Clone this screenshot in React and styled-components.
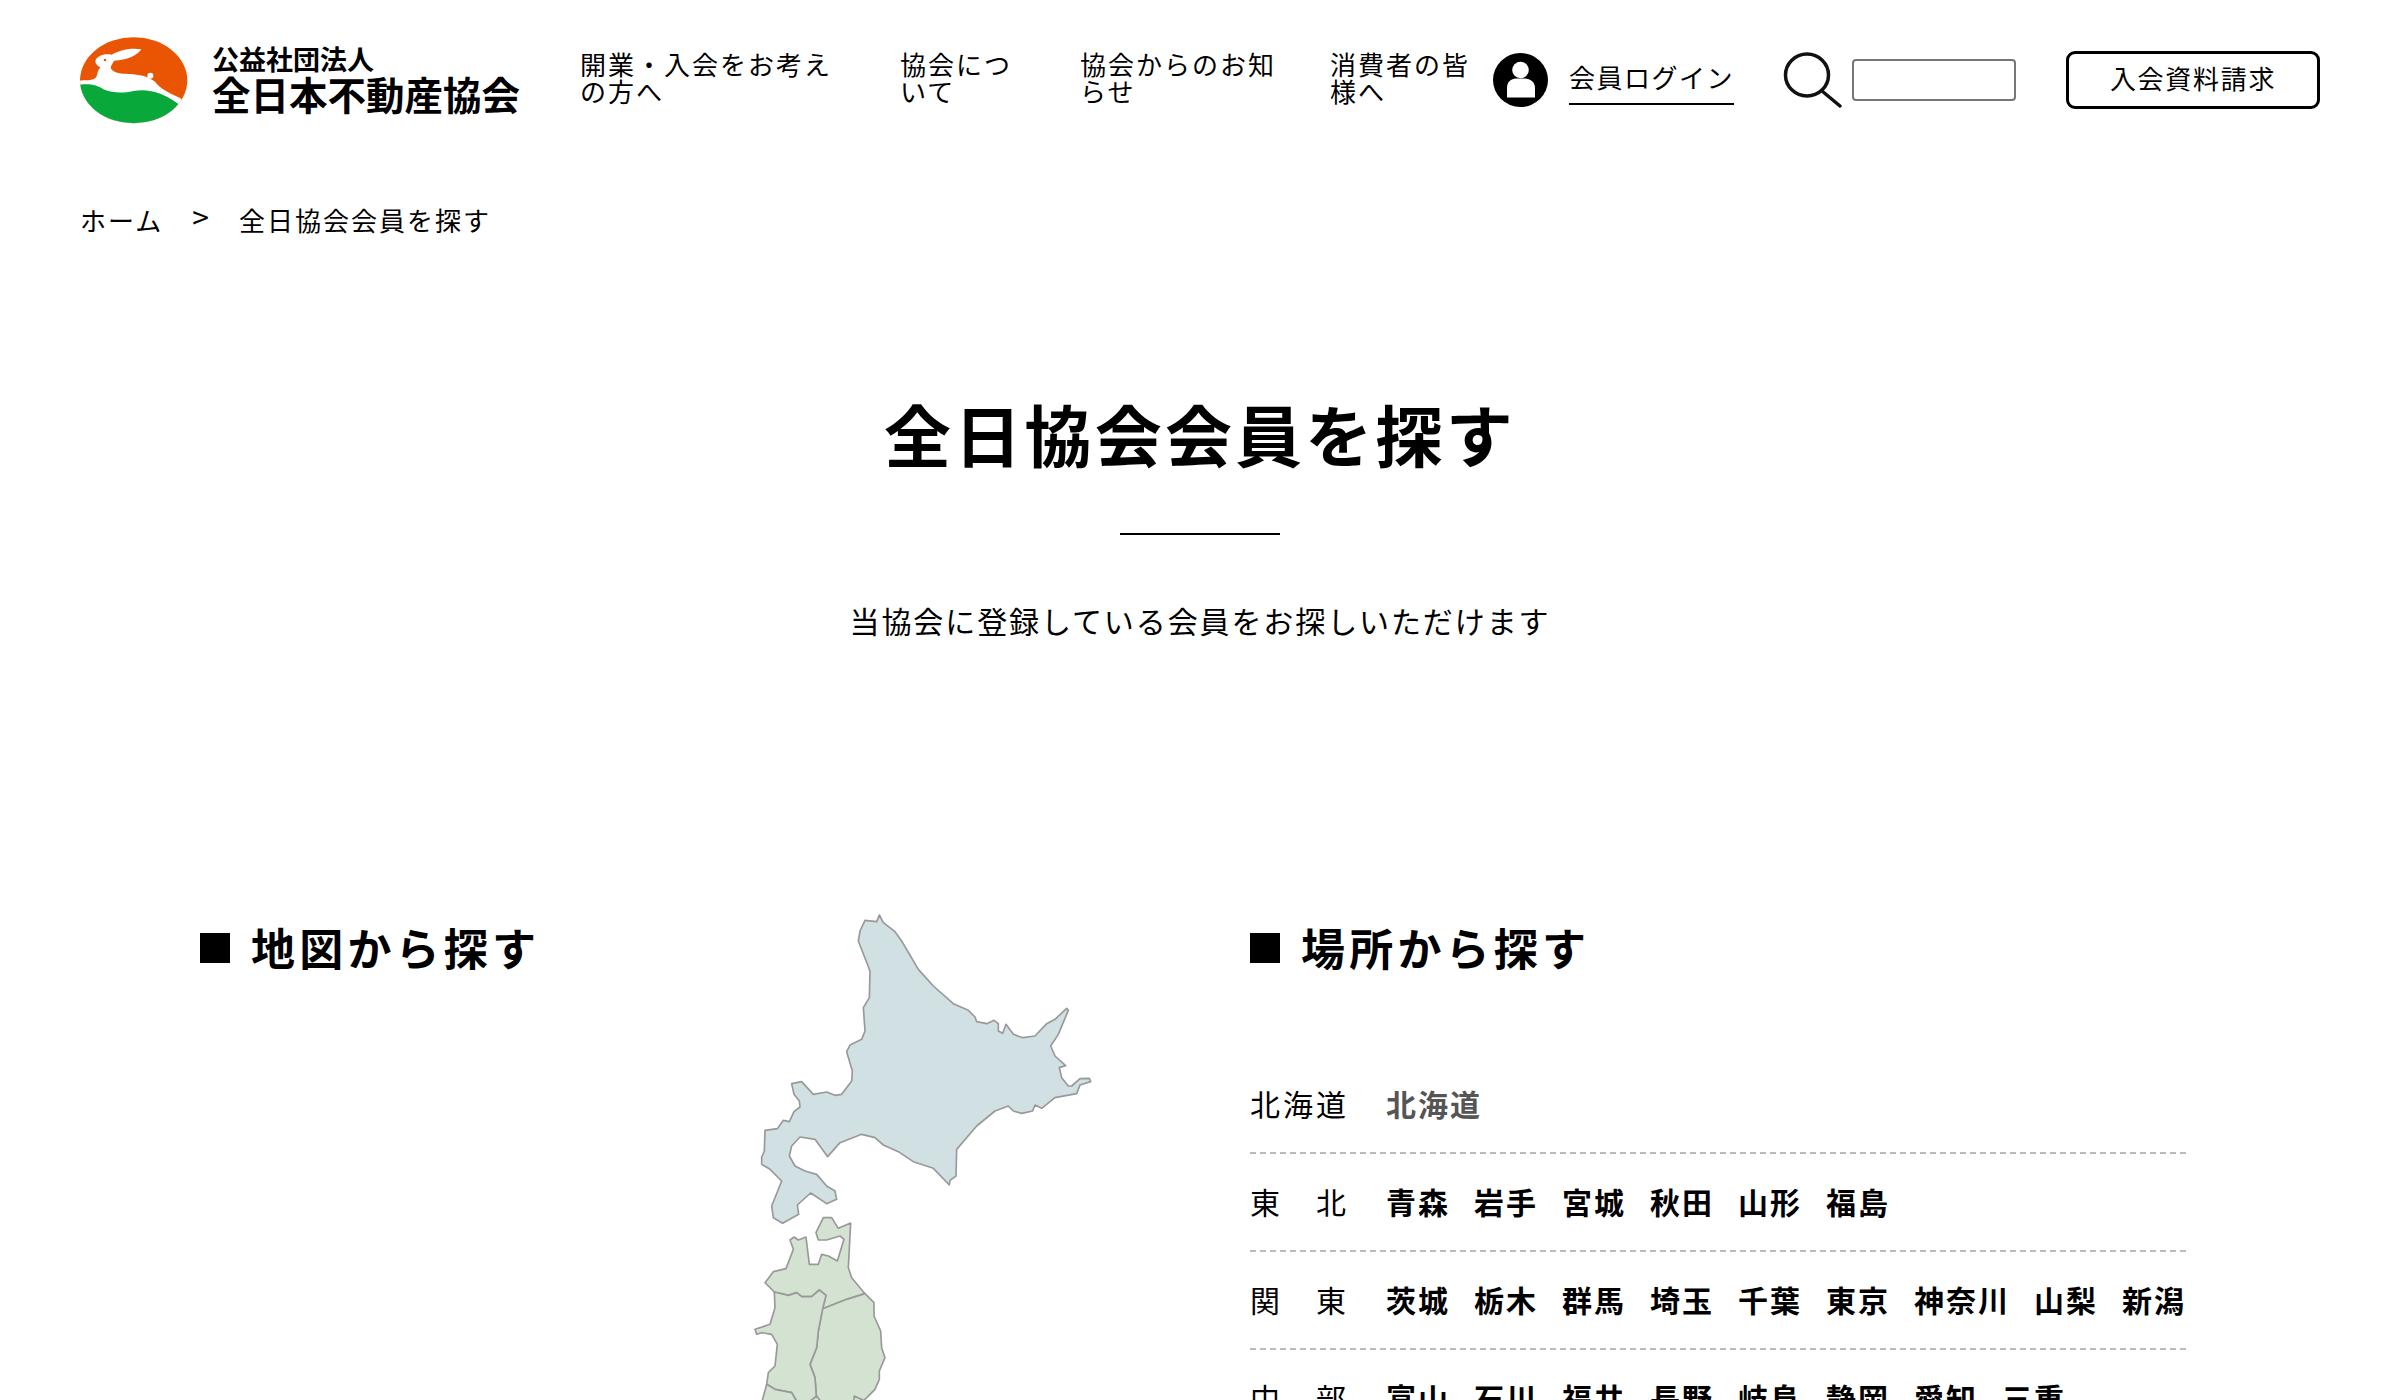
import React from 'react';
import styled, {createGlobalStyle} from 'styled-components';

const GlobalStyle = createGlobalStyle`
    html, body {
        margin: 0;
        padding: 0;
        background: #fff;
        overflow: hidden;
    }
    body {
        font-family: "Noto Sans CJK JP", "Noto Sans", sans-serif;
        color: #000;
    }
`;

const Page = styled.div`
    width: 2400px;
    height: 1400px;
    overflow: hidden;
`;

const Header = styled.header`
    display: flex;
    align-items: center;
    height: 160px;
    padding-left: 70px;
`;

const LogoLink = styled.a`
    display: flex;
    align-items: center;
    width: 510px;
    flex: none;
`;

const LogoSvg = styled.svg`
    flex: none;
`;

const LogoText = styled.div`
    margin: 0 0 6px 12px;
    display: flex;
    flex-direction: column;
    font-weight: 700;
`;

const LogoSmall = styled.span`
    font-size: 27px;
    line-height: 31px;
    margin-top: 1px;
`;

const LogoLarge = styled.span`
    font-size: 38.5px;
    line-height: 39px;
`;

const Nav = styled.nav`
    display: grid;
    grid-template-columns: 320px 180px 250px 163px;
    flex: none;
    margin-bottom: 6px;
`;

const NavItem = styled.a`
    max-width: ${props => props.$max}px;
    font-size: 26px;
    line-height: 27px;
    letter-spacing: 2px;
    word-break: break-all;
`;

const LoginLink = styled.a`
    display: flex;
    align-items: center;
    flex: none;
    width: 290px;
`;

const LoginText = styled.span`
    margin-left: 21px;
    margin-top: 4px;
    font-size: 26px;
    line-height: 36px;
    letter-spacing: 1.5px;
    padding-bottom: 8px;
    border-bottom: 2px solid #000;
`;

const SearchBox = styled.div`
    display: flex;
    align-items: center;
    flex: none;
    width: 283px;
`;

const SearchIconSvg = styled.svg`
    flex: none;
`;

const SearchInput = styled.input`
    width: 164px;
    height: 42px;
    box-sizing: border-box;
    margin-left: 9px;
    border: 2px solid #777;
    border-radius: 4px;
    background: #fff;
    padding: 0;
`;

const RequestButton = styled.a`
    display: flex;
    align-items: center;
    justify-content: center;
    box-sizing: border-box;
    width: 254px;
    height: 58px;
    padding-bottom: 5px;
    flex: none;
    border: 3px solid #000;
    border-radius: 9px;
    font-size: 26px;
    letter-spacing: 1.7px;
`;

const Breadcrumb = styled.div`
    display: flex;
    align-items: center;
    height: 44px;
    margin-top: 37px;
    padding-left: 80px;
    font-size: 26px;
    letter-spacing: 2px;
`;

const CrumbSep = styled.span`
    margin: 0 28px 0 29px;
    font-size: 30px;
    line-height: 30px;
    position: relative;
    top: -3px;
`;

const TitleBlock = styled.div`
    display: flex;
    flex-direction: column;
    align-items: center;
    margin-top: 150px;
`;

const Title = styled.h1`
    margin: 0;
    font-size: 67px;
    line-height: 84px;
    letter-spacing: 3.2px;
    font-weight: 700;
`;

const TitleRule = styled.div`
    width: 160px;
    height: 2px;
    background: #000;
    margin-top: 58px;
`;

const Lead = styled.p`
    margin: 65px 0 0;
    font-size: 30px;
    line-height: 40px;
    letter-spacing: 1.9px;
`;

const Columns = styled.div`
    display: flex;
    margin-top: 251px;
    padding-left: 200px;
`;

const MapColumn = styled.section`
    display: flex;
    align-items: flex-start;
    width: 1050px;
    flex: none;
`;

const MapHeadingWrap = styled.div`
    width: 520px;
    flex: none;
`;

const MapSvg = styled.svg`
    flex: none;
`;

const SectionHeading = styled.h2`
    display: flex;
    align-items: center;
    margin: 26px 0 0;
    height: 60px;
    font-size: 44px;
    letter-spacing: 4.2px;
    font-weight: 700;
`;

const HeadingMark = styled.span`
    width: 30px;
    height: 30px;
    background: #000;
    margin: 2px 21px 0 0;
    flex: none;
`;

const PlaceColumn = styled.section`
    width: 936px;
    flex: none;
`;

const PlaceList = styled.div`
    margin-top: 79px;
`;

const PlaceRow = styled.div`
    display: flex;
    align-items: center;
    height: 93px;
    padding-bottom: 3px;
    border-bottom: 2px dashed #bbb;
    font-size: 30px;
    letter-spacing: 2px;
`;

const RegionLabel = styled.span`
    width: 96px;
    margin-right: 40px;
    flex: none;
    text-align: justify;
    text-align-last: justify;
    letter-spacing: 0;
`;

const PrefList = styled.div`
    display: flex;
    gap: 24px;
    flex-wrap: nowrap;
`;

const PrefLink = styled.a`
    font-weight: 700;
    white-space: nowrap;
    color: ${props => (props.$muted ? '#555' : '#000')};
`;

const LogoMark = () => (
    <LogoSvg width="130" height="100" viewBox="0 0 390 300">
        <defs>
            <clipPath id="logoClip">
                <ellipse cx="191" cy="151" rx="161" ry="129"/>
            </clipPath>
        </defs>
        <g clipPath="url(#logoClip)">
            <rect width="390" height="300" fill="#ea5504"/>
            <path
                fill="#fff"
                d="M20,152 C45,150 60,152 72,147 C86,140 78,124 92,112 C82,108 72,98 78,88 C86,76 105,70 125,74 C145,62 180,52 214,58 C205,74 170,92 132,92 C128,100 122,108 122,115 C130,128 150,132 175,132 C195,133 215,135 232,142 C240,148 250,150 255,155 C270,175 290,185 332,205 L345,225 L340,300 L20,300 Z"
            />
            <circle cx="241" cy="137" r="9" fill="#fff"/>
            <circle cx="105" cy="90" r="4" fill="#ea5504"/>
            <path
                fill="#09a83a"
                d="M20,165 C60,160 80,165 100,178 C130,190 160,190 190,183 C240,175 280,190 325,222 L320,300 L20,300 Z"
            />
        </g>
    </LogoSvg>
);

const UserIcon = () => (
    <LogoSvg width="55" height="54" viewBox="0 0 55 54">
        <ellipse cx="27.5" cy="27" rx="27.5" ry="27" fill="#000"/>
        <circle cx="27.5" cy="17" r="8.3" fill="#fff"/>
        <path d="M14,44.5 V35 C14,29 18,25.5 23,25.5 H32 C37,25.5 42,29 42,35 V44.5 Z" fill="#fff"/>
    </LogoSvg>
);

const SearchIcon = () => (
    <SearchIconSvg width="60" height="56" viewBox="0 0 60 56">
        <ellipse cx="24" cy="23" rx="21.5" ry="21" fill="none" stroke="#111" strokeWidth="3.5"/>
        <path d="M39,39 L57,54" stroke="#111" strokeWidth="3.5" strokeLinecap="round"/>
    </SearchIconSvg>
);

const hokkaido = 'M478,72 L490,95 L525,122 L545,150 L595,235 L640,285 L700,338 L745,358 L765,378 L770,392 L800,398 L822,388 L835,398 L835,420 L848,427 L858,400 L880,430 L908,440 L945,435 L980,398 L1005,385 L1040,352 L1045,358 L1015,430 L992,465 L1005,495 L1037,524 L1018,530 L1025,560 L1045,585 L1055,585 L1080,563 L1108,562 L1112,572 L1080,582 L1070,608 L1005,620 L965,652 L945,642 L938,660 L905,667 L880,660 L865,645 L825,660 L770,705 L710,775 L708,855 L690,868 L688,882 L640,832 L580,812 L535,782 L490,762 L465,740 L425,730 L360,755 L323,797 L285,745 L240,738 L215,765 L208,795 L225,825 L255,840 L290,850 L320,885 L345,900 L350,925 L320,938 L272,906 L232,942 L236,970 L188,997 L160,980 L155,945 L185,870 L150,835 L125,820 L125,798 L133,780 L135,718 L172,713 L190,688 L208,692 L222,662 L240,648 L238,630 L222,610 L215,578 L245,572 L280,610 L320,603 L345,613 L365,610 L395,570 L397,540 L380,482 L390,462 L425,445 L435,420 L430,350 L448,320 L450,240 L415,150 L420,120 L435,88 L470,92 Z';
const aomori = 'M310,980 L335,980 L355,1012 L392,996 L385,1130 L395,1160 L435,1208 L380,1225 L308,1253 L318,1213 L298,1197 L275,1217 L245,1217 L230,1205 L205,1213 L163,1203 L135,1175 L160,1142 L198,1133 L220,1075 L210,1047 L222,1038 L235,1047 L258,1038 L268,1120 L295,1120 L305,1090 L325,1095 L352,1110 L372,1045 L360,1035 L320,1047 L295,1047 L288,1025 Z';
const iwate = 'M308,1253 L380,1225 L435,1208 L462,1235 L462,1275 L482,1320 L485,1370 L495,1400 L478,1440 L478,1465 L465,1495 L430,1530 L400,1530 L290,1530 L285,1460 L270,1420 L290,1370 L295,1320 Z';
const akita = 'M163,1203 L205,1213 L230,1205 L245,1217 L275,1217 L298,1197 L318,1213 L308,1253 L295,1320 L290,1370 L270,1420 L285,1460 L290,1530 L230,1530 L215,1505 L165,1495 L140,1480 L145,1445 L165,1425 L172,1360 L155,1330 L125,1325 L110,1330 L105,1315 L150,1300 L165,1250 Z';
const yamagata = 'M140,1480 L165,1495 L215,1505 L232,1535 L125,1535 Z';
const miyagi = 'M265,1535 L290,1515 L305,1535 Z M400,1535 L403,1515 L430,1528 L425,1535 Z';

const JapanMap = () => (
    <MapSvg width="400" height="510" viewBox="0 0 1200 1530">
        <g stroke="#999" strokeWidth="5" strokeLinejoin="round">
            <path d={hokkaido} fill="#d0e0e3"/>
            <path d={aomori} fill="#d4e2d2"/>
            <path d={iwate} fill="#d4e2d2"/>
            <path d={akita} fill="#d4e2d2"/>
            <path d={yamagata} fill="#d4e2d2"/>
            <path d={miyagi} fill="#d4e2d2"/>
        </g>
    </MapSvg>
);

const regions = [
    {label: '北海道', prefs: ['北海道'], muted: true},
    {label: '東北', prefs: ['青森', '岩手', '宮城', '秋田', '山形', '福島']},
    {label: '関東', prefs: ['茨城', '栃木', '群馬', '埼玉', '千葉', '東京', '神奈川', '山梨', '新潟']},
    {label: '中部', prefs: ['富山', '石川', '福井', '長野', '岐阜', '静岡', '愛知', '三重']},
];

const App = () => {
    return (
        <Page>
            <GlobalStyle/>
            <Header>
                <LogoLink>
                    <LogoMark/>
                    <LogoText>
                        <LogoSmall>公益社団法人</LogoSmall>
                        <LogoLarge>全日本不動産協会</LogoLarge>
                    </LogoText>
                </LogoLink>
                <Nav>
                    <NavItem $max={262}>開業・入会をお考えの方へ</NavItem>
                    <NavItem $max={120}>協会について</NavItem>
                    <NavItem $max={200}>協会からのお知らせ</NavItem>
                    <NavItem $max={145}>消費者の皆様へ</NavItem>
                </Nav>
                <LoginLink>
                    <UserIcon/>
                    <LoginText>会員ログイン</LoginText>
                </LoginLink>
                <SearchBox>
                    <SearchIcon/>
                    <SearchInput type="text"/>
                </SearchBox>
                <RequestButton>入会資料請求</RequestButton>
            </Header>
            <Breadcrumb>
                <span>ホーム</span>
                <CrumbSep>&gt;</CrumbSep>
                <span>全日協会会員を探す</span>
            </Breadcrumb>
            <TitleBlock>
                <Title>全日協会会員を探す</Title>
                <TitleRule/>
                <Lead>当協会に登録している会員をお探しいただけます</Lead>
            </TitleBlock>
            <Columns>
                <MapColumn>
                    <MapHeadingWrap>
                        <SectionHeading><HeadingMark/>地図から探す</SectionHeading>
                    </MapHeadingWrap>
                    <JapanMap/>
                </MapColumn>
                <PlaceColumn>
                    <SectionHeading><HeadingMark/>場所から探す</SectionHeading>
                    <PlaceList>
                        {regions.map(region => (
                            <PlaceRow key={region.label}>
                                <RegionLabel>{region.label}</RegionLabel>
                                <PrefList>
                                    {region.prefs.map(pref => (
                                        <PrefLink key={pref} $muted={region.muted}>{pref}</PrefLink>
                                    ))}
                                </PrefList>
                            </PlaceRow>
                        ))}
                    </PlaceList>
                </PlaceColumn>
            </Columns>
        </Page>
    );
};

export default App;
